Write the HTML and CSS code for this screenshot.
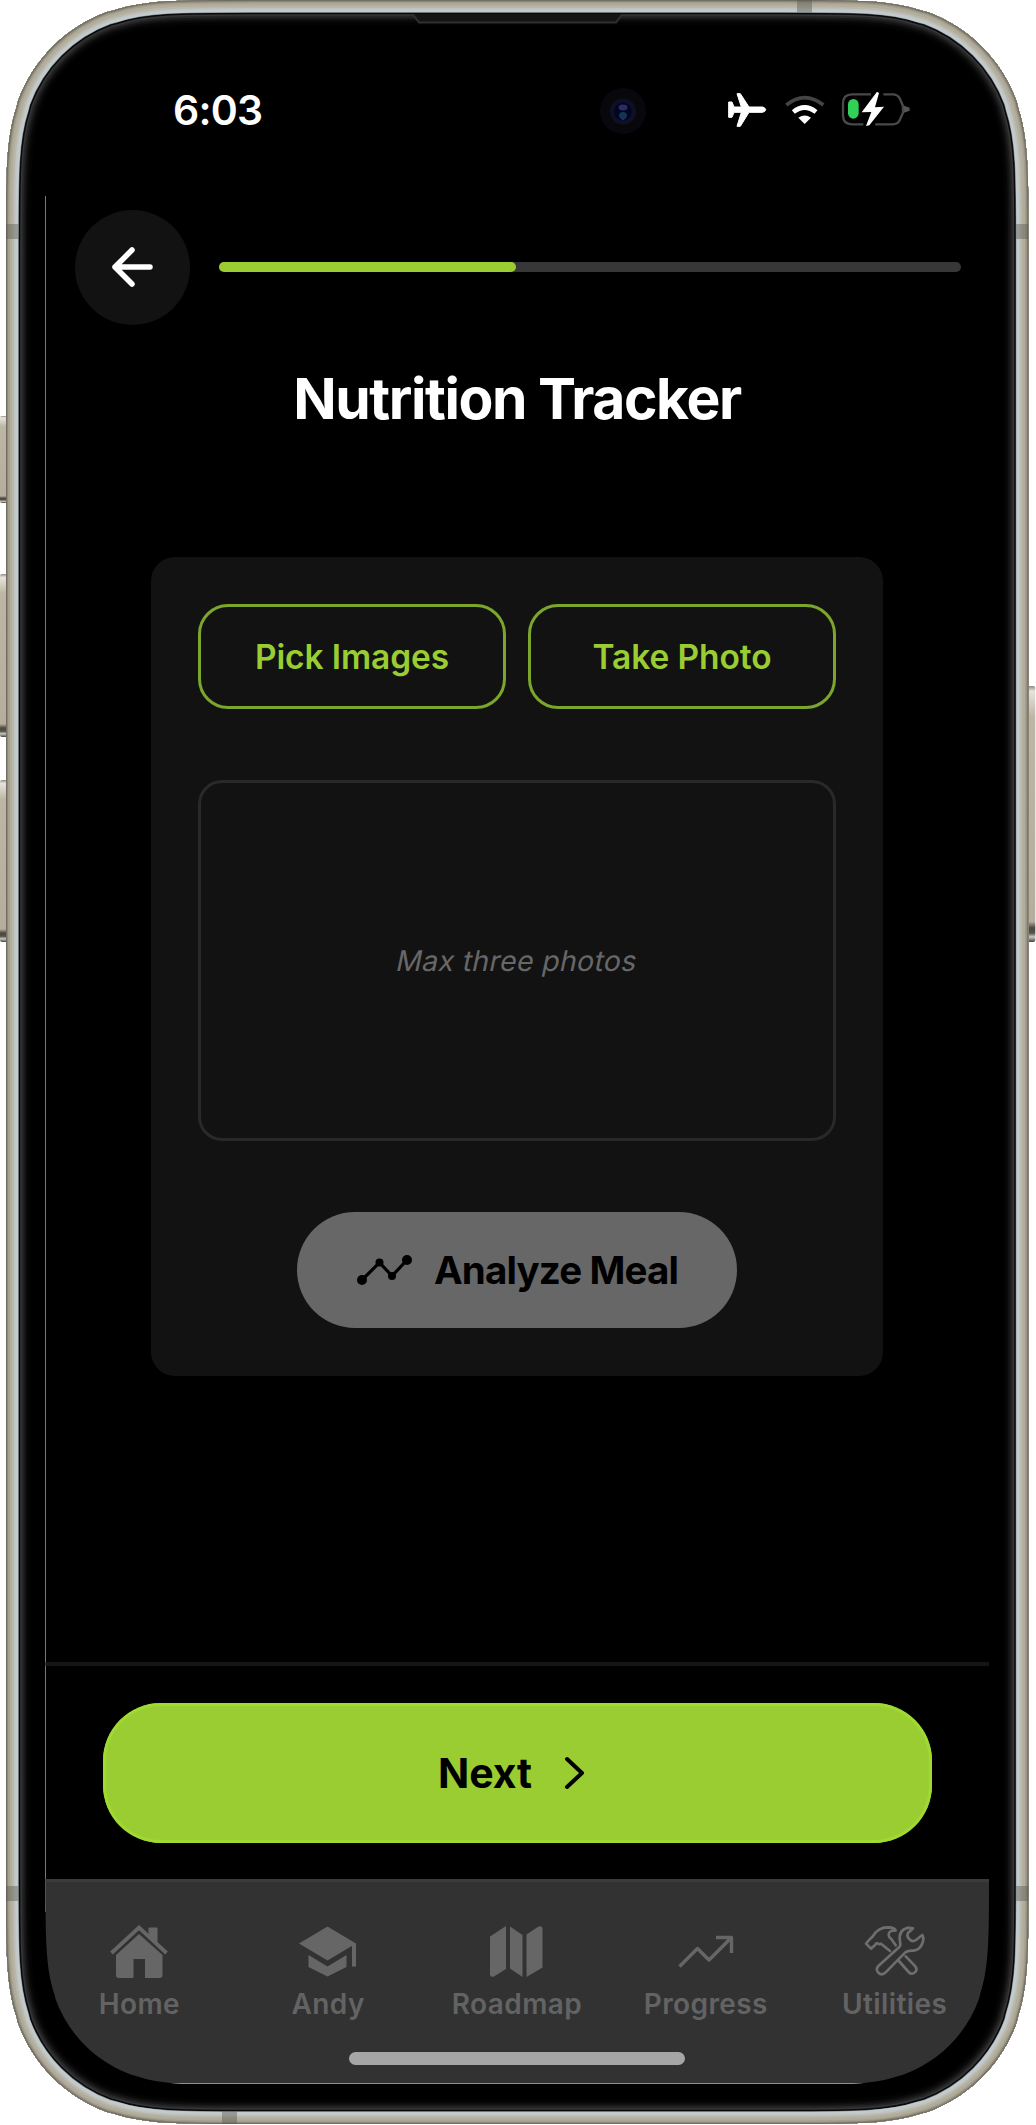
FILE: index.html
```html
<!DOCTYPE html>
<html lang="en">
<head>
<meta charset="utf-8">
<title>Nutrition Tracker</title>
<link rel="stylesheet" href="styles.css">
</head>
<body>
<div class="phone">
  <svg class="frame" viewBox="0 0 1036 2125" aria-hidden="true">
    <defs>
      <path id="body" d="M6 244.6C6 174.2 6 138.9 16.5 107.2L18 101C33.05 59.65 65.65 27.05 107 12L113.2 10.5C144.9 0 180.2 0 250.6 0H783.9C854.3 0 889.6 0 921.3 10.5L927.5 12C968.85 27.05 1001.45 59.65 1016.5 101L1018 107.2C1028.5 138.9 1028.5 174.2 1028.5 244.6V1879.4C1028.5 1949.8 1028.5 1985.1 1018 2016.8L1016.5 2023C1001.45 2064.35 968.85 2096.95 927.5 2112L921.3 2113.5C889.6 2124 854.3 2124 783.9 2124H250.6C180.2 2124 144.9 2124 113.2 2113.5L107 2112C65.65 2096.95 33.05 2064.35 18 2023L16.5 2016.8C6 1985.1 6 1949.8 6 1879.4Z"/>
      <clipPath id="bodyClip"><use href="#body"/></clipPath>
      <linearGradient id="key" x1="0" x2="0" y1="0" y2="1">
        <stop offset="0" stop-color="#8f8c80"/><stop offset=".02" stop-color="#e6e4dc"/><stop offset=".12" stop-color="#bdb6a5"/>
        <stop offset=".92" stop-color="#b5ae9d"/><stop offset=".945" stop-color="#4c4840"/><stop offset=".965" stop-color="#55524a"/><stop offset=".98" stop-color="#c9c8c2"/><stop offset="1" stop-color="#45433d"/>
      </linearGradient>
    </defs>
    <g fill="url(#key)">
      <rect x="0" y="416" width="8" height="87" rx="2"/>
      <rect x="0" y="574" width="8" height="163" rx="2"/>
      <rect x="0" y="780" width="8" height="162" rx="2"/>
      <rect x="1026" y="686" width="9.3" height="256" rx="2"/>
    </g>
    <g clip-path="url(#bodyClip)" fill="none">
      <use href="#body" fill="#000"/>
      <use href="#body" stroke="#030303" stroke-width="50"/>
      <use href="#body" stroke="#080808" stroke-width="45"/>
      <use href="#body" stroke="#111" stroke-width="41"/>
      <use href="#body" stroke="#1a1a1a" stroke-width="38"/>
      <use href="#body" stroke="#262627" stroke-width="35"/>
      <use href="#body" stroke="#363638" stroke-width="31.5"/>
      <use href="#body" stroke="#08090b" stroke-width="28.5"/>
      <use href="#body" stroke="#70767a" stroke-width="25.5"/>
      <use href="#body" stroke="#c3cacc" stroke-width="24.5"/>
      <use href="#body" stroke="#bfc3c0" stroke-width="19"/>
      <use href="#body" stroke="#b9b7aa" stroke-width="16"/>
      <use href="#body" stroke="#b1ac9b" stroke-width="12"/>
      <use href="#body" stroke="#a39e8d" stroke-width="7"/>
      <use href="#body" stroke="#8d897a" stroke-width="4"/>
      <use href="#body" stroke="#716e62" stroke-width="2"/>
      <g fill="#55554f" fill-opacity=".42">
        <rect x="6" y="224" width="12.3" height="15"/><rect x="1016.2" y="224" width="12.3" height="15"/>
        <rect x="6" y="1886" width="12.3" height="15"/><rect x="1016.2" y="1886" width="12.3" height="15"/>
        <rect x="797" y="0" width="15" height="12.5"/><rect x="222" y="2111.500" width="15" height="12.500"/>
      </g>
    </g>
    <path d="M413 14H622L616 23H419Z" fill="#141415"/>
    <path d="M413 14.500L419 22.500H616L622 14.500" fill="none" stroke="#303031" stroke-width="2"/>
    <path d="M45.500 196V1912" fill="none" stroke="#77777a"/>
  </svg>

  <main class="screen">
    <header class="status">
      <time class="clock">6:03</time>
      <svg class="camera" viewBox="0 0 48 48" aria-hidden="true">
        <circle cx="24" cy="24" r="23" fill="#08070b"/><circle cx="24" cy="24.500" r="13" fill="#10111f"/>
        <circle cx="24" cy="24.500" r="9.500" fill="#030619" stroke="#060f3c" stroke-width="1.500"/>
        <ellipse cx="24" cy="20.500" rx="4.500" ry="3" fill="#2b2a6b"/><ellipse cx="24" cy="28.500" rx="4" ry="3.500" fill="#123555"/><circle cx="24" cy="31.500" r="1.800" fill="#35205f"/>
      </svg>
      <svg class="indicators" viewBox="0 0 600 150" aria-label="Airplane mode, Wi-Fi, battery charging">
        <path fill="#fff" stroke="#fff" stroke-width="3" stroke-linejoin="round" d="M51 26H61L87 66H128Q137 69 137 74Q137 79 128 82H87L61 124H51L64 82H42L36 97H26V51H36L42 66H64Z"/>
        <path fill="none" stroke="#444" stroke-width="11" d="M199 60Q254 16 310 60"/>
        <path fill="none" stroke="#fff" stroke-width="14" d="M220 81Q254 54 288 81"/>
        <path fill="#fff" d="M235 98Q254 85 273 98L254 117Z"/>
        <path fill="none" stroke="#4a484b" stroke-width="7" d="M453 28H396Q369 28 369 55V91Q369 118 396 118H430M490 28H518Q533 28 539 40L549 63V83L539 106Q533 118 518 118H466"/>
        <path fill="#555" d="M552 62L569 68V77L552 83Z"/>
        <rect x="384" y="42" width="32" height="59" rx="16" fill="#31d158"/>
        <path fill="#fff" d="M471 20L425 82L454 81L438 123L448 121L492 65L465 67L477 24Z"/>
      </svg>
    </header>

    <nav class="progress-row">
      <button class="back" aria-label="Back">
        <svg width="42" height="42" viewBox="0 0 42 42"><path d="M39 21H4M21 4L4 21L21 38" fill="none" stroke="#fff" stroke-width="5.500" stroke-linecap="round" stroke-linejoin="round"/></svg>
      </button>
      <div class="track"><div class="fill"></div></div>
    </nav>

    <h1 class="title">Nutrition Tracker</h1>

    <section class="card">
      <div class="pickers">
        <button class="outline">Pick Images</button>
        <button class="outline">Take Photo</button>
      </div>
      <div class="dropbox"><span class="hint">Max three photos</span></div>
      <button class="analyze">
        <svg width="57" height="34" viewBox="0 0 57 34"><path d="M6 27L23.500 9.500L36 23L51 7" fill="none" stroke="#000" stroke-width="3.200"/><g fill="#000"><circle cx="6" cy="27" r="5"/><circle cx="23.500" cy="9.500" r="4"/><circle cx="36" cy="23" r="4"/><circle cx="51" cy="7" r="5"/></g></svg>
        <span>Analyze Meal</span>
      </button>
    </section>

    <div class="next-bar">
      <button class="next"><span>Next</span>
        <svg width="22" height="34" viewBox="0 0 22 34"><path d="M3 3L18 17L3 31" fill="none" stroke="#000" stroke-width="4" stroke-linecap="round" stroke-linejoin="round"/></svg>
      </button>
    </div>

    <footer class="bottom">
      <nav class="tabs">
        <a class="tab"><svg width="58" height="56" viewBox="0 0 58 56"><path d="M1.500 29L29 3.500L56.500 29" fill="none" stroke="#666" stroke-width="3.800"/><path fill="#666" d="M38.500 3.500H47.500V19L38.500 11ZM29 10L52.500 31V51Q52.500 54 49.500 54H35V35H23.500V54H9Q6 54 6 51V31Z"/></svg><span>Home</span></a>
        <a class="tab"><svg width="58" height="56" viewBox="0 -2 58 56"><path fill="#666" d="M0 17.500L28.500 .5L57 17.500L28.500 34.500ZM9.500 29L28.500 40.500L47.500 29V41L28.500 50.500L9.500 41Z"/><path d="M55 17.500V40.500" stroke="#666" stroke-width="4"/></svg><span>Andy</span></a>
        <a class="tab"><svg width="53" height="56" viewBox="0 -2 53 56"><path fill="#666" d="M0 10.500L16 0V43L4 50.500Q0 51.500 0 48.500ZM20 .5L32.500 9V51L20 42.500ZM36.500 8.500L48.500 .5Q52.500 -.5 52.500 3V41.500L36.500 51Z"/></svg><span>Roadmap</span></a>
        <a class="tab"><svg width="56" height="56" viewBox="0 -11 56 56"><path fill="none" stroke="#666" stroke-width="3.400" stroke-linejoin="round" d="M1.500 31.500L19.500 13.500L31 25L52.500 3.500M38 2.500H53.500V18"/></svg><span>Progress</span></a>
        <a class="tab"><svg width="62" height="56" viewBox="26 32 186 168"><path fill="none" stroke="#6e6e6e" stroke-width="8" stroke-linejoin="round" stroke-linecap="round" d="M69 158L132 101Q137 96 134 84Q128 51 157 43L173 45L158 59Q153 70 163 78Q171 87 182 80L201 65Q206 73 203 84Q197 108 175 112Q158 111 150 117L91 177Q80 188 69 178Q60 168 69 158ZM128 140L160 176Q170 187 181 175Q187 167 178 157L151 129M32 91L44 77Q51 72 60 58Q70 47 86 43L104 42Q117 44 121 51Q99 51 100 65Q100 71 108 77L121 96M32 91L47 106L60 94Q61 89 67 90Q71 94 77 91L104 113"/></svg><span>Utilities</span></a>
      </nav>
      <div class="home-indicator"></div>
    </footer>
  </main>
</div>
</body>
</html>
```
FILE: styles.css
```css
* { box-sizing: border-box; }

body {
  margin: 0;
  background: #fff;
  font-family: Inter, "Liberation Sans", sans-serif;
}

button {
  margin: 0;
  padding: 0;
  border: 0;
  font: inherit;
  color: #000;
}

svg { display: block; flex: none; }
span, h1, time { white-space: nowrap; }

.phone {
  position: relative;
  width: 1036px;
  height: 2125px;
  overflow: hidden;
}

.frame {
  position: absolute;
  inset: 0;
  width: 1036px;
  height: 2125px;
}

.screen {
  position: relative;
  display: flex;
  flex-direction: column;
  height: 2125px;
  padding: 85px 47px 40px 45px;
  clip-path: path("M45.5 245.4C45.5 185.9 45.5 156.2 54.35 129.4L55.6 124.25C68.3 89.3 95.8 61.8 130.75 49.1L135.9 47.85C162.7 39 192.4 39 251.9 39H782.6C842.1 39 871.8 39 898.6 47.85L903.75 49.1C938.7 61.8 966.2 89.3 978.9 124.25L980.15 129.4C989 156.2 989 185.9 989 245.4V1878.1C989 1937.6 989 1967.3 980.15 1994.1L978.9 1999.25C966.2 2034.2 938.7 2061.7 903.75 2074.4L898.6 2076C871.8 2085 842.1 2085 782.6 2085H251.9C192.4 2085 162.7 2085 135.9 2076L130.75 2074.4C95.8 2061.7 68.3 2034.2 55.6 1999.25L54.35 1994.1C45.5 1967.3 45.5 1937.6 45.5 1878.1Z");
}

.status {
  display: flex;
  height: 50px;
  padding-left: 128px;
}

.clock {
  width: 426px;
  color: #fff;
  font-size: 41px;
  font-weight: 600;
  line-height: 50px;
  letter-spacing: -0.8px;
}

.camera { width: 48px; height: 48px; margin-top: 2px; }
.indicators { width: 200px; height: 50px; margin-left: 73px; }

.progress-row {
  display: flex;
  align-items: center;
  gap: 29px;
  height: 115px;
  margin: 74.5px 0 0 30px;
}

.back {
  display: grid;
  place-items: center;
  width: 115px;
  height: 115px;
  padding-right: 2px;
  border-radius: 50%;
  background: #121212;
}

.track {
  width: 742px;
  height: 10px;
  border-radius: 5px;
  background: #373737;
}

.fill {
  width: 40%;
  height: 10px;
  border-radius: 5px;
  background: #9acd32;
}

.title {
  margin: 39px 0 0;
  color: #fff;
  font-size: 57px;
  font-weight: 700;
  line-height: 70px;
  letter-spacing: -1.45px;
  text-align: center;
}

.card {
  display: flex;
  flex-direction: column;
  align-items: center;
  width: 732px;
  height: 819px;
  margin: 123px auto 0;
  padding: 47px;
  border-radius: 24px;
  background: #121212;
}

.pickers { display: flex; gap: 22px; width: 638px; }

.outline {
  flex: 1;
  height: 105px;
  padding-top: 1px;
  border: 3px solid #7ba62b;
  border-radius: 30px;
  background: none;
  color: #9acd32;
  font-size: 33.5px;
  font-weight: 600;
  letter-spacing: -0.1px;
}

.dropbox {
  display: grid;
  place-items: center;
  width: 638px;
  height: 361px;
  margin-top: 71px;
  border: 3px solid #292929;
  border-radius: 24px;
  color: #676767;
  font-size: 28.5px;
}

.hint {
  padding-top: 1px;
  letter-spacing: 0.3px;
  transform: skewX(-12deg);
}

.analyze {
  display: flex;
  align-items: center;
  justify-content: center;
  gap: 21px;
  width: 440px;
  height: 116px;
  margin-top: 71px;
  border-radius: 58px;
  background: #676767;
  font-size: 38.5px;
  font-weight: 700;
  letter-spacing: -0.85px;
}

.next-bar {
  height: 217px;
  margin-top: 286.5px;
  padding: 37px 57px 0 58px;
  border-top: 4px solid #151515;
}

.next {
  display: flex;
  align-items: center;
  justify-content: center;
  gap: 32px;
  width: 829px;
  height: 140px;
  padding-right: 11px;
  border-radius: 58px;
  background: #9acd32;
  box-shadow: inset 0 0 0 3px #a0d932;
  font-size: 41px;
  font-weight: 700;
}

.bottom {
  height: 205px;
  padding-top: 42px;
  border-top: 3px solid #3b3b3b;
  border-bottom: 1px solid #8f8f8f;
  background: #323232;
}

.tabs {
  display: grid;
  grid-template-columns: repeat(5, 1fr);
  height: 128px;
  color: #636363;
  font-size: 28px;
  font-weight: 600;
  letter-spacing: 0.4px;
}

.tab {
  display: flex;
  flex-direction: column;
  align-items: center;
  gap: 7px;
  line-height: 34px;
}

.home-indicator {
  width: 336px;
  height: 13px;
  margin: 0 auto;
  border-radius: 7px;
  background: #a6a6a6;
}
```
